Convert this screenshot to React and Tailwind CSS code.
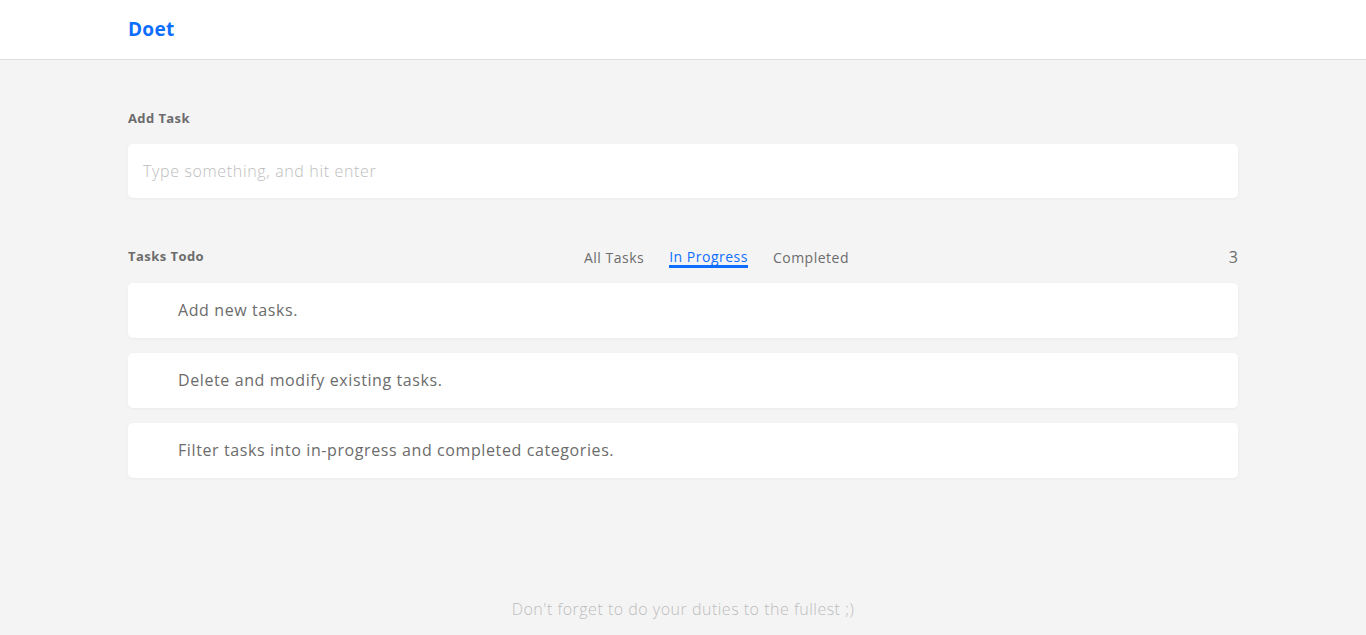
export default function App() {
  const tasks = [
    "Add new tasks.",
    "Delete and modify existing tasks.",
    "Filter tasks into in-progress and completed categories.",
  ];
  return (
    <div
      className="min-h-screen flex flex-col bg-[#f4f4f4]"
      style={{ fontFamily: "'Open Sans', 'Liberation Sans', sans-serif" }}
    >
      <header className="h-[60px] bg-white border-b border-[#dddddd] flex items-center px-[128px]">
        <span className="text-[19px] font-bold text-[#0d6efd] leading-none tracking-[0.3px]">Doet</span>
      </header>

      <main className="px-[128px] pt-[48px]">
        <div className="text-[13px] font-bold text-[#6c6c6c] leading-[20px] tracking-[0.4px]">Add Task</div>
        <div className="mt-[16px] h-[54px] bg-white rounded-[5px] shadow-[0_1px_3px_rgba(0,0,0,0.04)] flex items-center px-[15px]">
          <span className="text-[16px] font-light text-[#bdbdbd] tracking-[0.65px]">Type something, and hit enter</span>
        </div>

        <div className="mt-[47px] h-[24px] flex items-center justify-between">
          <span className="text-[13px] font-bold text-[#6c6c6c] tracking-[0.45px]">Tasks Todo</span>
          <div className="flex items-center gap-[25px] text-[14px] text-[#6c6c6c] tracking-[0.5px]">
            <span className="leading-[16px] mt-[2px]">All Tasks</span>
            <span className="leading-[16px] text-[#0d6efd] border-b-[3px] border-[#0d6efd] mt-[2px]">In Progress</span>
            <span className="leading-[16px] mt-[2px]">Completed</span>
          </div>
          <span className="text-[16px] text-[#6c6c6c]">3</span>
        </div>

        <div className="mt-[14px] flex flex-col gap-[15px]">
          {tasks.map((t) => (
            <div
              key={t}
              className="h-[55px] bg-white rounded-[5px] shadow-[0_1px_3px_rgba(0,0,0,0.04)] flex items-center pl-[50px]"
            >
              <span className="text-[16px] text-[#6c6c6c] tracking-[0.6px] leading-[22px] -mt-[1px]">{t}</span>
            </div>
          ))}
        </div>
      </main>

      <footer className="mt-auto pb-[14px] text-center">
        <span className="text-[16px] font-light text-[#bdbdbd] leading-[24px] tracking-[0.5px]">
          Don't forget to do your duties to the fullest ;)
        </span>
      </footer>
    </div>
  );
}
